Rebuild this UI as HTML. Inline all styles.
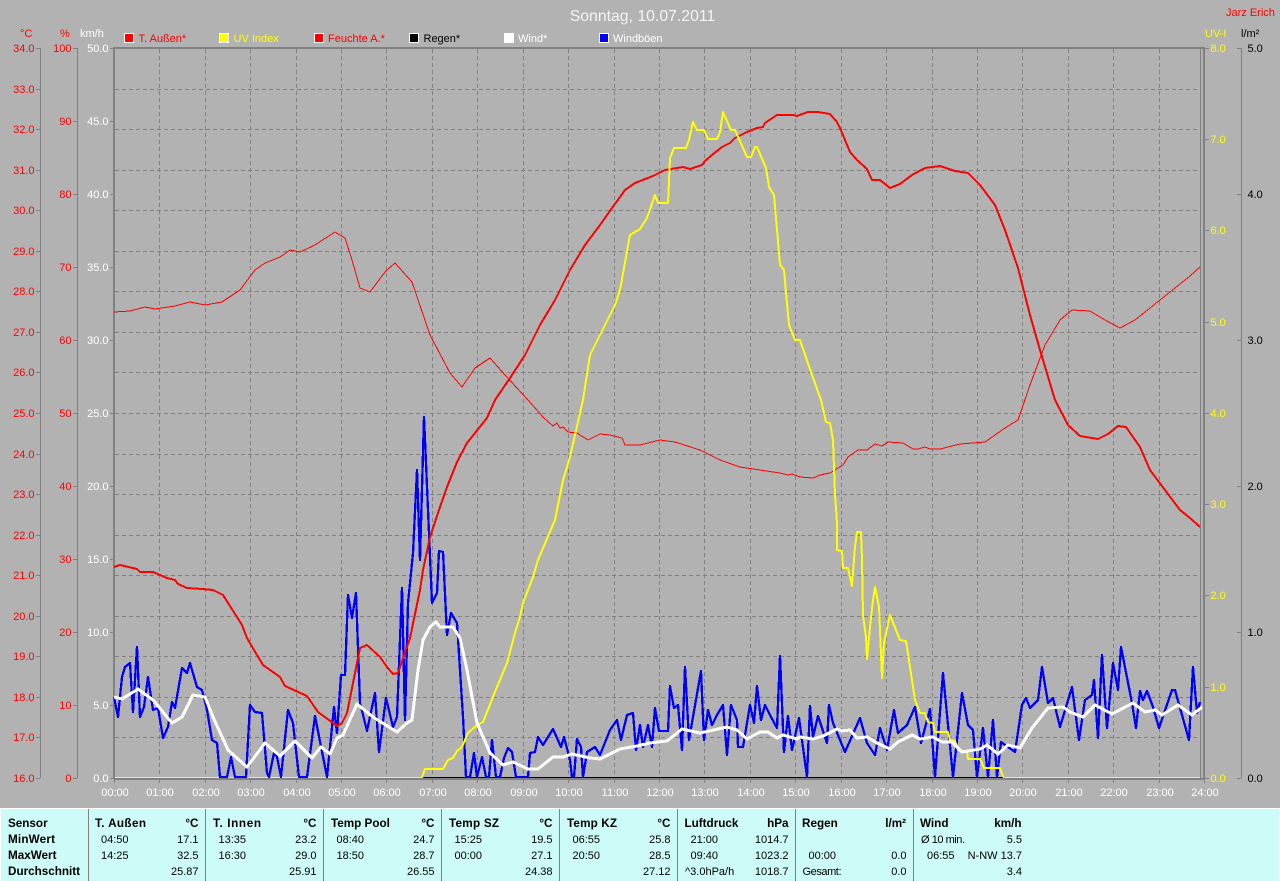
<!DOCTYPE html>
<html lang="de"><head><meta charset="utf-8"><title>Sonntag, 10.07.2011</title>
<style>
html,body{margin:0;padding:0;background:#b2b2b2;width:1280px;height:881px;overflow:hidden}
svg{display:block}
text{font-family:"Liberation Sans",sans-serif;font-size:11px}
.b text,text.b{font-weight:bold;font-size:11.7px}
</style></head><body>
<svg width="1280" height="881" viewBox="0 0 1280 881" xmlns="http://www.w3.org/2000/svg">
<rect width="1280" height="881" fill="#b2b2b2"/>

<!-- title -->
<text x="642.5" y="21" text-anchor="middle" fill="#f4f4f4" style="font-size:15.8px">Sonntag, 10.07.2011</text>
<text x="1226" y="16" fill="#ff0000">Jarz Erich</text>

<!-- units -->
<text x="20" y="37" fill="#ff0000">°C</text>
<text x="60" y="37" fill="#ff0000">%</text>
<text x="80" y="37" fill="#ffffff">km/h</text>
<text x="1205" y="37" fill="#ffff00">UV-I</text>
<text x="1241" y="37" fill="#000000">l/m²</text>

<!-- legend -->
<g stroke="#ffffff" stroke-width="1" shape-rendering="crispEdges">
<rect x="124.5" y="33.5" width="9" height="9" fill="#ff0000"/>
<rect x="219.5" y="33.5" width="9" height="9" fill="#ffff00"/>
<rect x="314.5" y="33.5" width="9" height="9" fill="#ff0000"/>
<rect x="409.5" y="33.5" width="9" height="9" fill="#000000"/>
<rect x="504.5" y="33.5" width="9" height="9" fill="#ffffff"/>
<rect x="599.5" y="33.5" width="9" height="9" fill="#0000ff"/>
</g>
<text x="138.5" y="42" fill="#ff0000">T. Außen*</text>
<text x="233.5" y="42" fill="#ffff00">UV Index</text>
<text x="328" y="42" fill="#ff0000">Feuchte A.*</text>
<text x="423.5" y="42" fill="#000000">Regen*</text>
<text x="518" y="42" fill="#ffffff">Wind*</text>
<text x="613" y="42" fill="#ffffff">Windböen</text>

<!-- grid -->
<path fill="none" stroke="#808080" stroke-width="1" stroke-dasharray="4 3" shape-rendering="crispEdges" d="M159.5 49V778M205.5 49V778M250.5 49V778M296.5 49V778M341.5 49V778M386.5 49V778M432.5 49V778M477.5 49V778M523.5 49V778M568.5 49V778M614.5 49V778M659.5 49V778M704.5 49V778M750.5 49V778M795.5 49V778M841.5 49V778M886.5 49V778M932.5 49V778M977.5 49V778M1022.5 49V778M1068.5 49V778M1113.5 49V778M1159.5 49V778
M115 89.5H1200M115 129.5H1200M115 170.5H1200M115 210.5H1200M115 251.5H1200M115 291.5H1200M115 332.5H1200M115 372.5H1200M115 413.5H1200M115 454.5H1200M115 494.5H1200M115 535.5H1200M115 575.5H1200M115 616.5H1200M115 656.5H1200M115 697.5H1200M115 737.5H1200"/>

<!-- frame and axes -->
<g fill="#808080" shape-rendering="crispEdges">
<rect x="113" y="47" width="1092" height="2"/>
<rect x="113" y="47" width="2" height="732"/>
<rect x="1203" y="47" width="2" height="732"/>
<rect x="114" y="778" width="1090" height="2"/>
</g>
<path fill="none" stroke="#808080" stroke-width="1" shape-rendering="crispEdges" d="M1200.5 49V778
M40.5 48V778M36 48.5h4M36 89.5h4M36 129.5h4M36 170.5h4M36 210.5h4M36 251.5h4M36 291.5h4M36 332.5h4M36 372.5h4M36 413.5h4M36 454.5h4M36 494.5h4M36 535.5h4M36 575.5h4M36 616.5h4M36 656.5h4M36 697.5h4M36 737.5h4M36 778.5h4
M77.5 48V778M73 48.5h4M73 121.5h4M73 194.5h4M73 267.5h4M73 340.5h4M73 413.5h4M73 486.5h4M73 559.5h4M73 632.5h4M73 705.5h4M73 778.5h4
M110 48.5h3M110 121.5h3M110 194.5h3M110 267.5h3M110 340.5h3M110 413.5h3M110 486.5h3M110 559.5h3M110 632.5h3M110 705.5h3M110 778.5h3
M1205 48.5h4M1205 139.5h4M1205 230.5h4M1205 322.5h4M1205 413.5h4M1205 504.5h4M1205 595.5h4M1205 687.5h4M1205 778.5h4
M1241.5 48V778M1237 48.5h4M1237 194.5h4M1237 340.5h4M1237 486.5h4M1237 632.5h4M1237 778.5h4
M114.5 779V783M159.5 779V783M205.5 779V783M250.5 779V783M296.5 779V783M341.5 779V783M386.5 779V783M432.5 779V783M477.5 779V783M523.5 779V783M568.5 779V783M614.5 779V783M659.5 779V783M704.5 779V783M750.5 779V783M795.5 779V783M841.5 779V783M886.5 779V783M932.5 779V783M977.5 779V783M1022.5 779V783M1068.5 779V783M1113.5 779V783M1159.5 779V783M1204.5 779V783"/>

<!-- left scale °C -->
<g fill="#ff0000" text-anchor="end">
<text x="34.5" y="52">34.0</text><text x="34.5" y="93">33.0</text><text x="34.5" y="133">32.0</text><text x="34.5" y="174">31.0</text><text x="34.5" y="214">30.0</text><text x="34.5" y="255">29.0</text><text x="34.5" y="295">28.0</text><text x="34.5" y="336">27.0</text><text x="34.5" y="376">26.0</text><text x="34.5" y="417">25.0</text><text x="34.5" y="458">24.0</text><text x="34.5" y="498">23.0</text><text x="34.5" y="539">22.0</text><text x="34.5" y="579">21.0</text><text x="34.5" y="620">20.0</text><text x="34.5" y="660">19.0</text><text x="34.5" y="701">18.0</text><text x="34.5" y="741">17.0</text><text x="34.5" y="782">16.0</text>
<text x="71.5" y="52">100</text><text x="71.5" y="125">90</text><text x="71.5" y="198">80</text><text x="71.5" y="271">70</text><text x="71.5" y="344">60</text><text x="71.5" y="417">50</text><text x="71.5" y="490">40</text><text x="71.5" y="563">30</text><text x="71.5" y="636">20</text><text x="71.5" y="709">10</text><text x="71.5" y="782">0</text>
</g>
<g fill="#ffffff" text-anchor="end">
<text x="108.5" y="52">50.0</text><text x="108.5" y="125">45.0</text><text x="108.5" y="198">40.0</text><text x="108.5" y="271">35.0</text><text x="108.5" y="344">30.0</text><text x="108.5" y="417">25.0</text><text x="108.5" y="490">20.0</text><text x="108.5" y="563">15.0</text><text x="108.5" y="636">10.0</text><text x="108.5" y="709">5.0</text><text x="108.5" y="782">0.0</text>
</g>
<g fill="#ffff00">
<text x="1210.5" y="52">8.0</text><text x="1210.5" y="143">7.0</text><text x="1210.5" y="234">6.0</text><text x="1210.5" y="326">5.0</text><text x="1210.5" y="417">4.0</text><text x="1210.5" y="508">3.0</text><text x="1210.5" y="599">2.0</text><text x="1210.5" y="691">1.0</text><text x="1210.5" y="782">0.0</text>
</g>
<g fill="#000000">
<text x="1247.5" y="52">5.0</text><text x="1247.5" y="198">4.0</text><text x="1247.5" y="344">3.0</text><text x="1247.5" y="490">2.0</text><text x="1247.5" y="636">1.0</text><text x="1247.5" y="782">0.0</text>
</g>

<!-- time labels -->
<g fill="#ffffff" text-anchor="middle">
<text x="115" y="796">00:00</text><text x="160" y="796">01:00</text><text x="206" y="796">02:00</text><text x="251" y="796">03:00</text><text x="297" y="796">04:00</text><text x="342" y="796">05:00</text><text x="387" y="796">06:00</text><text x="433" y="796">07:00</text><text x="478" y="796">08:00</text><text x="524" y="796">09:00</text><text x="569" y="796">10:00</text><text x="615" y="796">11:00</text><text x="660" y="796">12:00</text><text x="705" y="796">13:00</text><text x="751" y="796">14:00</text><text x="796" y="796">15:00</text><text x="842" y="796">16:00</text><text x="887" y="796">17:00</text><text x="933" y="796">18:00</text><text x="978" y="796">19:00</text><text x="1023" y="796">20:00</text><text x="1069" y="796">21:00</text><text x="1114" y="796">22:00</text><text x="1160" y="796">23:00</text><text x="1205" y="796">24:00</text>
</g>

<!-- base lines -->
<g shape-rendering="crispEdges">
<rect x="423" y="777" width="580" height="1" fill="#000000"/>
<rect x="115" y="777" width="308" height="1" fill="#ffff00"/>
<rect x="1003" y="777" width="197" height="1" fill="#ffff00"/>
</g>

<!-- gusts -->
<polyline fill="none" stroke="#0000ff" stroke-width="2.3" stroke-linejoin="round" shape-rendering="crispEdges" points="114,697 118,717 122,677 125,667 130,663 133,712 137,647 140,717 144,707 148,677 153,710 158,708 163,738 168,727 172,702 175,708 182,668 187,673 190,663 197,687 202,690 207,710 212,740 217,743 220,777 227,777 231,757 235,777 246,777 250,705 255,712 262,713 267,773 269,777 274,753 277,757 281,777 288,710 293,723 299,777 307,777 315,716 327,777 334,707 337,733 341,675 345,675 348,595 352,618 356,593 360,703 367,731 375,693 379,752 386,698 393,727 397,717 402,588 405,720 408,603 413,553 417,470 420,560 424,417 426,463 428,510 432,603 437,593 439,551 443,552 447,635 451,613 457,623 463,717 466,777 470,777 474,753 477,777 482,757 486,777 489,777 492,740 496,777 500,777 504,758 508,748 512,752 516,777 528,777 530,753 535,752 538,737 543,745 553,729 561,747 564,737 570,760 572,777 574,777 577,739 581,747 583,777 587,752 595,747 600,755 610,730 617,720 621,740 627,715 633,713 636,750 640,725 643,747 648,725 652,747 655,708 659,731 668,731 670,686 674,708 678,705 682,750 685,667 689,740 701,671 704,740 708,710 712,725 717,715 723,705 727,755 731,705 737,720 738,747 743,747 750,705 754,723 757,686 761,720 765,705 770,715 777,728 780,656 784,752 788,716 792,750 799,718 807,777 810,706 813,737 818,716 827,743 829,705 833,723 845,752 860,718 867,743 875,755 880,728 887,750 894,710 898,733 907,725 915,707 921,743 930,709 935,777 943,673 953,777 962,693 968,725 973,730 977,777 983,728 988,777 993,720 997,777 1001,742 1015,752 1022,705 1026,698 1030,708 1038,700 1042,667 1048,703 1053,698 1060,727 1072,687 1079,740 1085,700 1092,695 1094,680 1098,738 1102,655 1107,728 1113,663 1118,690 1121,647 1132,703 1136,728 1140,691 1143,700 1147,691 1153,707 1159,728 1172,690 1175,690 1189,740 1193,667 1197,713 1200,702"/>

<!-- thick red -->
<polyline fill="none" stroke="#ff0000" stroke-width="2" stroke-linejoin="round" shape-rendering="crispEdges" points="114,567 120,565 137,569 140,572 153,572 167,578 175,580 178,584 187,588 202,589 213,590 223,595 237,617 242,625 247,638 257,655 263,665 280,677 285,686 307,696 318,712 337,726 342,723 347,713 357,663 360,648 367,645 380,657 387,667 393,674 398,673 410,638 420,590 423,570 430,537 440,507 447,487 457,462 467,443 487,418 495,400 510,378 525,355 540,325 555,300 570,270 585,245 600,225 612,208 620,197 625,190 635,183 653,176 665,170 683,167 690,169 702,165 705,161 712,155 722,147 730,143 735,138 747,132 757,128 763,127 765,123 777,115 793,115 797,116 808,112 818,112 830,114 837,122 840,128 850,152 857,160 867,169 872,180 880,180 890,188 900,184 912,175 925,168 940,166 955,171 968,173 980,185 995,205 1005,230 1018,268 1030,315 1040,350 1055,400 1068,425 1080,436 1098,439 1108,434 1118,426 1126,427 1140,447 1150,470 1165,490 1180,510 1190,518 1200,527"/>

<!-- thin red -->
<polyline fill="none" stroke="#ff0000" stroke-width="1" shape-rendering="crispEdges" points="114,312 130,311 145,307 155,309 175,306 190,302 205,305 222,302 240,290 255,270 265,263 280,257 290,250 300,252 315,245 335,232 345,238 352,260 360,288 370,292 385,272 395,263 412,282 430,335 450,373 462,387 475,368 490,358 505,375 528,400 543,417 553,426 557,423 560,428 563,427 568,432 577,433 588,440 600,434 610,435 622,438 625,445 640,445 660,440 675,442 700,450 720,460 740,467 760,470 780,473 788,475 792,474 800,477 813,478 820,475 830,473 843,465 848,457 858,450 867,450 875,444 882,446 888,442 903,443 913,449 918,449 925,447 930,449 940,449 960,444 985,442 1005,428 1018,420 1030,385 1045,345 1060,320 1072,310 1090,311 1105,320 1120,328 1135,320 1150,308 1170,292 1190,276 1200,267"/>

<!-- UV -->
<polyline fill="none" stroke="#ffff00" stroke-width="2" stroke-linejoin="round" shape-rendering="crispEdges" points="422,777 425,769 443,769 448,760 453,758 457,751 462,747 468,733 477,725 483,722 497,687 507,663 515,633 520,617 523,603 533,577 538,560 555,520 563,480 570,457 583,400 590,355 600,335 615,305 620,290 630,235 640,229 647,218 655,195 658,203 668,203 670,158 674,148 686,148 689,140 693,122 697,130 704,130 708,139 717,139 720,132 723,112 731,130 735,130 747,157 751,157 755,147 757,147 766,168 769,187 774,195 776,218 780,265 784,270 789,325 795,340 800,340 812,375 821,400 826,422 830,423 833,440 835,495 837,523 837,550 842,551 843,568 848,568 852,586 855,547 857,532 861,532 862,560 863,615 866,637 867,659 870,627 873,600 875,587 879,607 882,678 884,643 890,615 900,640 906,641 915,700 920,713 925,713 928,722 933,723 935,732 948,732 950,740 955,741 958,750 967,752 968,759 980,759 984,768 1000,768 1003,777"/>

<!-- wind -->
<polyline fill="none" stroke="#ffffff" stroke-width="3" stroke-linejoin="round" shape-rendering="crispEdges" points="114,697 122,699 138,689 153,700 172,723 182,717 193,695 205,697 213,717 228,750 247,767 265,743 280,756 295,741 312,758 321,747 330,754 337,738 343,735 357,704 373,717 397,732 407,723 412,720 418,670 423,640 430,627 436,622 440,627 453,627 460,638 467,670 477,723 490,753 503,765 513,762 528,769 538,769 553,757 563,757 572,754 590,758 600,759 620,749 637,746 650,743 667,741 682,729 700,733 727,727 737,730 747,739 760,732 768,732 777,738 783,735 797,739 800,737 813,739 823,736 837,729 842,731 850,730 857,738 867,737 877,743 890,749 898,742 912,735 920,739 933,737 942,742 952,742 962,752 980,749 987,745 998,754 1008,745 1020,748 1032,728 1048,708 1063,707 1070,712 1083,717 1095,705 1112,714 1133,703 1145,712 1155,710 1162,715 1178,705 1192,715 1202,707"/>

<!-- bottom panel -->
<rect x="0" y="808" width="1280" height="73" fill="#ffffff" shape-rendering="crispEdges"/>
<rect x="1" y="809" width="1278" height="72" fill="#ccfbf8" shape-rendering="crispEdges"/>
<path fill="none" stroke="#808080" stroke-width="1" shape-rendering="crispEdges" d="M88.5 809V881M205.5 809V881M323.5 809V881M441.5 809V881M559.5 809V881M677.5 809V881M795.5 809V881M913.5 809V881"/>

<g fill="#000000">
<g class="b">
<text x="8" y="827">Sensor</text><text x="8" y="843" textLength="47">MinWert</text><text x="8" y="859">MaxWert</text><text x="8" y="875">Durchschnitt</text>
<text x="95" y="827" textLength="51">T. Außen</text><text x="198.5" y="827" text-anchor="end">°C</text>
<text x="213" y="827" textLength="48">T. Innen</text><text x="316.5" y="827" text-anchor="end">°C</text>
<text x="331" y="827">Temp Pool</text><text x="434.5" y="827" text-anchor="end">°C</text>
<text x="449" y="827" textLength="50">Temp SZ</text><text x="552.5" y="827" text-anchor="end">°C</text>
<text x="567" y="827" textLength="50">Temp KZ</text><text x="670.5" y="827" text-anchor="end">°C</text>
<text x="684.5" y="827">Luftdruck</text><text x="788.5" y="827" text-anchor="end">hPa</text>
<text x="802" y="827">Regen</text><text x="906" y="827" text-anchor="end">l/m²</text>
<text x="920" y="827">Wind</text><text x="1021.5" y="827" text-anchor="end">km/h</text>
</g>
<text x="101" y="843">04:50</text><text x="198.5" y="843" text-anchor="end">17.1</text>
<text x="101" y="859">14:25</text><text x="198.5" y="859" text-anchor="end">32.5</text>
<text x="198.5" y="875" text-anchor="end">25.87</text>
<text x="218.5" y="843">13:35</text><text x="316.5" y="843" text-anchor="end">23.2</text>
<text x="218.5" y="859">16:30</text><text x="316.5" y="859" text-anchor="end">29.0</text>
<text x="316.5" y="875" text-anchor="end">25.91</text>
<text x="336.5" y="843">08:40</text><text x="434.5" y="843" text-anchor="end">24.7</text>
<text x="336.5" y="859">18:50</text><text x="434.5" y="859" text-anchor="end">28.7</text>
<text x="434.5" y="875" text-anchor="end">26.55</text>
<text x="454.5" y="843">15:25</text><text x="552.5" y="843" text-anchor="end">19.5</text>
<text x="454.5" y="859">00:00</text><text x="552.5" y="859" text-anchor="end">27.1</text>
<text x="552.5" y="875" text-anchor="end">24.38</text>
<text x="572.5" y="843">06:55</text><text x="670.5" y="843" text-anchor="end">25.8</text>
<text x="572.5" y="859">20:50</text><text x="670.5" y="859" text-anchor="end">28.5</text>
<text x="670.5" y="875" text-anchor="end">27.12</text>
<text x="690.5" y="843">21:00</text><text x="788.5" y="843" text-anchor="end">1014.7</text>
<text x="690.5" y="859">09:40</text><text x="788.5" y="859" text-anchor="end">1023.2</text>
<text x="685" y="875">^3.0hPa/h</text><text x="788.5" y="875" text-anchor="end">1018.7</text>
<text x="808.5" y="859">00:00</text><text x="906.5" y="859" text-anchor="end">0.0</text>
<text x="802.5" y="875" textLength="39">Gesamt:</text><text x="906.5" y="875" text-anchor="end">0.0</text>
<text x="921" y="843" textLength="44">Ø 10 min.</text><text x="1022" y="843" text-anchor="end">5.5</text>
<text x="927" y="859">06:55</text><text x="1022" y="859" text-anchor="end">N-NW 13.7</text>
<text x="1022" y="875" text-anchor="end">3.4</text>
</g>
</svg>
</body></html>
